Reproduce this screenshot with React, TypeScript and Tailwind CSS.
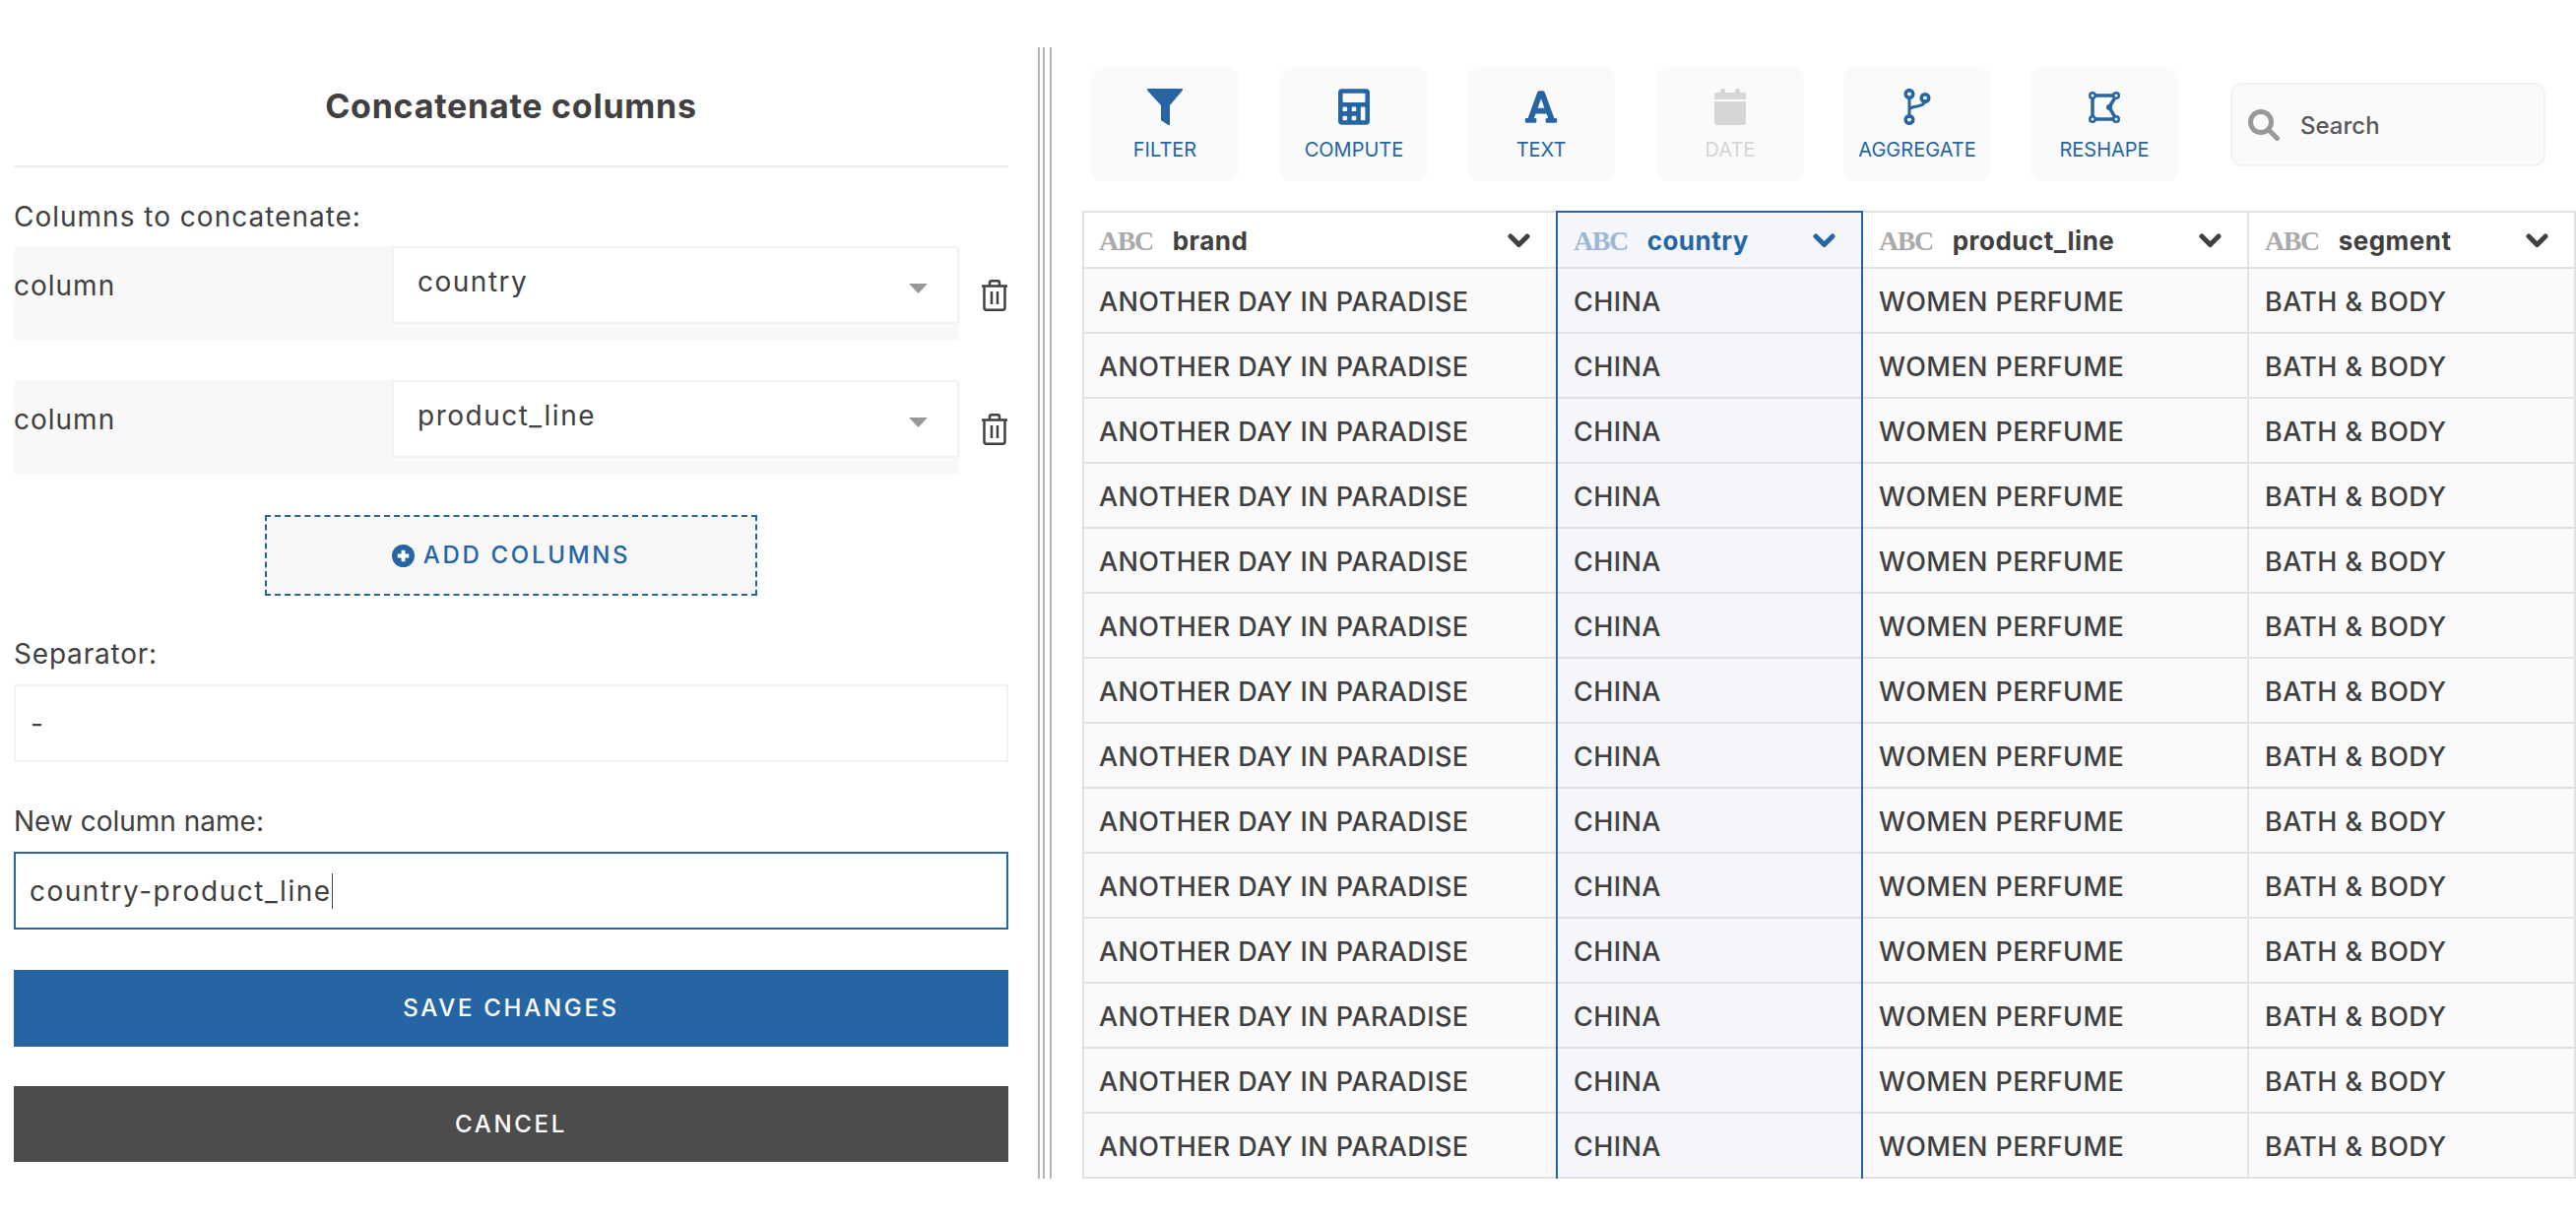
import { FaCalculator, FaFont } from "react-icons/fa";

const ROW_COUNT = 14;

function Funnel() {
  return (
    <svg viewBox="0 0 36 37" className="w-[36px] h-[37px]" fill="#2565a3">
      <path d="M1 0h34c1 0 1.400 1.200.7 2L23 17v19c0 1-.8 1.300-1.500.9l-7-4.500c-.4-.3-.5-.6-.5-1.100V17L.3 2C-.4 1.200 0 0 1 0z" />
    </svg>
  );
}

function Calendar() {
  return (
    <svg viewBox="0 0 32 37" className="w-[32px] h-[37px]" fill="#d6d6d6">
      <rect x="6" y="0" width="5" height="8" rx="2" />
      <rect x="21" y="0" width="5" height="8" rx="2" />
      <path d="M2 4h28a2 2 0 0 1 2 2v5H0V6a2 2 0 0 1 2-2z" />
      <path d="M0 13h32v21a3 3 0 0 1-3 3H3a3 3 0 0 1-3-3z" />
    </svg>
  );
}

function Branch() {
  return (
    <svg viewBox="0 0 28 37" className="w-[28px] h-[37px]" fill="none" stroke="#2565a3">
      <path d="M6 8v22M6 22c0-6 16-1 16-11" strokeWidth="3" />
      <circle cx="6" cy="5.500" r="3.800" strokeWidth="3.500" />
      <circle cx="22" cy="9.500" r="3.800" strokeWidth="3.500" />
      <circle cx="6" cy="31.500" r="3.800" strokeWidth="3.500" />
    </svg>
  );
}

function Reshape() {
  return (
    <svg viewBox="0 0 32 32" className="w-[32px] h-[32px]" fill="none" stroke="#2565a3">
      <path d="M4 4h24l-7 12 7 12H4z" strokeWidth="3.500" />
      <g fill="#2565a3" strokeWidth="0">
        <circle cx="4" cy="4" r="4" />
        <circle cx="28" cy="4" r="4" />
        <circle cx="4" cy="28" r="4" />
        <circle cx="28" cy="28" r="4" />
        <circle cx="21" cy="16" r="3" />
      </g>
      <g fill="#fafafa" strokeWidth="0">
        <circle cx="4" cy="4" r="1.500" />
        <circle cx="28" cy="4" r="1.500" />
        <circle cx="4" cy="28" r="1.500" />
        <circle cx="28" cy="28" r="1.500" />
      </g>
    </svg>
  );
}

function Trash() {
  return (
    <svg viewBox="0 0 28 32" className="w-[28px] h-[32px]" fill="none" stroke="#404040" strokeWidth="2.500">
      <path d="M1 6.500h26" />
      <path d="M9 6V3.500C9 2 10 1.300 11 1.300h6c1 0 2 .7 2 2.200V6" />
      <path d="M3.500 7v21.500c0 1.300.9 2.200 2 2.200h17c1.100 0 2-.9 2-2.200V7" />
      <path d="M11 12v13M17 12v13" />
    </svg>
  );
}

function Chevron({ color }: { color: string }) {
  return (
    <svg viewBox="0 0 23 15" className="w-[23px] h-[15px]" fill="none" stroke={color} strokeWidth="5" strokeLinecap="round" strokeLinejoin="round">
      <path d="M3 3l8.500 8.500L20 3" />
    </svg>
  );
}

function SelectRow({ value }: { value: string }) {
  return (
    <div className="flex">
      <div className="w-[960px] h-[96px] bg-[#f8f8f8] flex items-start">
        <div className="w-[384px] h-[80px] flex items-center text-[28px] tracking-[1px] text-[#404040]">column</div>
        <div className="w-[576px] h-[79px] bg-white border-2 border-[#f2f2f2] flex items-start justify-between pl-[24px] pr-[30px]">
          <span className="mt-[16px] text-[28px] tracking-[1.500px] leading-[36px] text-[#404040]">{value}</span>
          <svg viewBox="0 0 19 10" className="w-[19px] h-[10px] mt-[36px]" fill="#999999">
            <path d="M0 0h19L9.500 10z" />
          </svg>
        </div>
      </div>
      <div className="ml-[22px] mt-[34px]">
        <Trash />
      </div>
    </div>
  );
}

const tools = [
  { label: "FILTER", icon: <Funnel />, box: "ml-[9px] w-[150px]" },
  { label: "COMPUTE", icon: <FaCalculator className="w-[32px] h-[37px]" color="#2565a3" />, box: "ml-[42px] w-[150px]" },
  { label: "TEXT", icon: <FaFont className="w-[36px] h-[37px]" color="#2565a3" />, box: "ml-[40px] w-[150px]" },
  { label: "DATE", icon: <Calendar />, box: "ml-[42px] w-[150px]", off: true },
  { label: "AGGREGATE", icon: <Branch />, box: "ml-[40px] w-[150px]" },
  { label: "RESHAPE", icon: <Reshape />, box: "ml-[40px] w-[150px]" },
];

const columns = [
  { name: "brand", value: "ANOTHER DAY IN PARADISE", width: "w-[481px] border-l-2 border-l-[#e2e2e2]", pad: "pl-[15px] pr-[26px]" },
  { name: "country", value: "CHINA", width: "w-[312px] border-x-2 border-x-[#2565a3]", pad: "pl-[16px] pr-[26px]", active: true },
  { name: "product_line", value: "WOMEN PERFUME", width: "w-[392px] border-r-2 border-r-[#e2e2e2]", pad: "pl-[16px] pr-[26px]" },
  { name: "segment", value: "BATH & BODY", width: "w-[332px] border-r-2 border-r-[#e2e2e2]", pad: "pl-[16px] pr-[26px]" },
];

export default function App() {
  const rows = Array.from({ length: ROW_COUNT }, (_, i) => i);

  return (
    <div className="w-[2616px] h-[1240px] bg-white flex font-['Inter',sans-serif] text-[#404040] overflow-hidden">
      {/* Left form */}
      <div className="w-[1054px] pl-[14px] pr-[30px] flex flex-col">
        <div className="h-[170px] pt-[84px] border-b-2 border-[#eeeeee] text-center text-[34px] tracking-[0.750px] leading-[48px] font-bold">
          Concatenate columns
        </div>

        <div className="mt-[34px] mb-[14px] text-[28px] tracking-[1px] leading-[32px]">Columns to concatenate:</div>
        <SelectRow value="country" />
        <div className="mt-[40px]">
          <SelectRow value="product_line" />
        </div>

        <div className="mt-[41px] mx-auto w-[500px] h-[82px] bg-[#f8f8f8] border-2 border-dashed border-[#2565a3] flex items-center justify-center text-[#2565a3] text-[24px] tracking-[2.700px] font-medium">
          <svg viewBox="0 0 24 24" className="w-[23px] h-[23px] mr-[9px]">
            <circle cx="12" cy="12" r="12" fill="#2565a3" />
            <path d="M12 6v12M6 12h12" stroke="#ffffff" strokeWidth="4" />
          </svg>
          ADD COLUMNS
        </div>

        <div className="mt-[43px] mb-[15px] text-[28px] tracking-[0.800px] leading-[32px]">Separator:</div>
        <div className="h-[79px] border-2 border-[#f2f2f2] flex items-center pl-[15px] text-[28px]">-</div>

        <div className="mt-[44px] mb-[15px] text-[28px] leading-[32px]">New column name:</div>
        <div className="h-[79px] border-2 border-[#2565a3] flex items-center pl-[14px] text-[28px] tracking-[1.500px]">
          country-product_line
          <span className="w-[1px] h-[36px] bg-[#404040]" />
        </div>

        <div className="mt-[41px] h-[78px] bg-[#2565a3] flex items-center justify-center text-white text-[24px] tracking-[2.700px] font-medium">
          SAVE CHANGES
        </div>
        <div className="mt-[40px] h-[77px] bg-[#4c4c4c] flex items-center justify-center text-white text-[24px] tracking-[2.700px] font-medium">
          CANCEL
        </div>
      </div>

      {/* Resize handle */}
      <div className="mt-[48px] h-[1149px] w-[14px] flex">
        <div className="w-[2px] bg-[#b5b5b5]" />
        <div className="w-[2px] ml-[3px] bg-[#b5b5b5]" />
        <div className="w-[2px] ml-[5px] bg-[#b5b5b5]" />
      </div>

      {/* Right table */}
      <div className="flex-1 pl-[31px] pt-[68px] flex flex-col">
        <div className="h-[116px] flex items-start">
          {tools.map((t) => (
            <div key={t.label} className={`${t.box} h-[116px] bg-[#fafafa] rounded-[12px] flex flex-col items-center pt-[22px]`}>
              <div className="h-[37px] flex items-center">{t.icon}</div>
              <div className={`mt-[13px] text-[20px] leading-[24px] ${t.off ? "text-[#d6d6d6]" : "text-[#2565a3]"}`}>{t.label}</div>
            </div>
          ))}
          <div className="ml-[53px] mt-[16px] w-[320px] h-[85px] bg-[#fafafa] border-2 border-[#f3f3f3] rounded-[12px] flex items-center pl-[16px]">
            <svg viewBox="0 0 32 32" className="w-[32px] h-[32px]" fill="none" stroke="#999999">
              <circle cx="13" cy="13" r="10.500" strokeWidth="5" />
              <path d="M21 21l8.500 8.500" strokeWidth="5" strokeLinecap="round" />
            </svg>
            <span className="ml-[21px] mt-[2px] text-[24px] font-medium text-[#595959]">Search</span>
          </div>
        </div>

        <div className="mt-[30px] flex">
          {columns.map((c) => (
            <div key={c.name} className={`${c.width} flex flex-col ${c.active ? "bg-[#f4f6fb]" : "bg-[#fafafa]"}`}>
              <div
                className={`h-[59px] pt-[2px] border-t-2 border-b-2 border-b-[#e2e2e2] flex items-center justify-between ${c.pad} ${
                  c.active ? "border-t-[#2565a3] bg-[#f4f6fb]" : "border-t-[#e2e2e2] bg-white"
                }`}
              >
                <div className="flex items-center">
                  <span className={`font-['Liberation_Serif',serif] font-bold text-[28px] tracking-[-1.500px] ${c.active ? "text-[#9db8d6]" : "text-[#aaaaaa]"}`}>ABC</span>
                  <span className={`ml-[20px] text-[26px] tracking-[0.500px] font-bold ${c.active ? "text-[#2565a3]" : "text-[#404040]"}`}>{c.name}</span>
                </div>
                <Chevron color={c.active ? "#2565a3" : "#404040"} />
              </div>
              {rows.map((r) => (
                <div key={r} className={`h-[66px] pt-[4px] border-b-2 border-b-[#e2e2e2] flex items-center text-[27px] tracking-[0.400px] font-medium ${c.pad}`}>
                  {c.value}
                </div>
              ))}
            </div>
          ))}
        </div>
      </div>
    </div>
  );
}
